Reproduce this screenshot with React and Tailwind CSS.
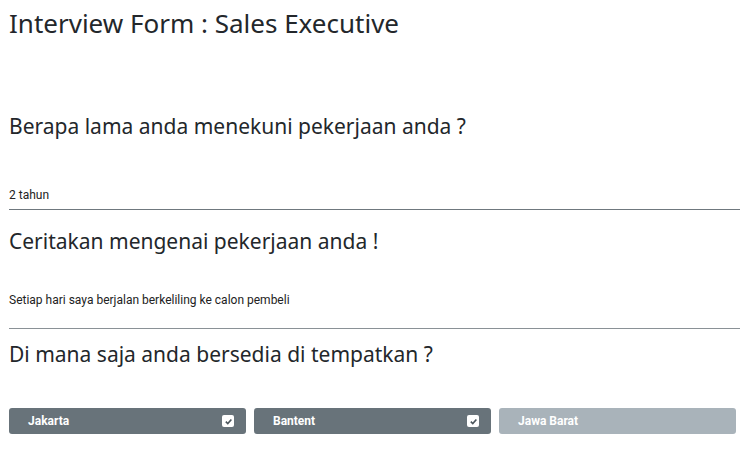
import React from "react";

const heading = { fontFamily: '"Noto Sans", sans-serif' };

function Check() {
  return (
    <span className="flex h-[12px] w-[12px] items-center justify-center rounded-[2px] bg-white">
      <svg width="9" height="9" viewBox="0 0 10 10">
        <path d="M2 5.2 L4.2 7.3 L8.2 2.8" fill="none" stroke="#4b555c" strokeWidth="1.8" />
      </svg>
    </span>
  );
}

function Option({ label, checked, disabled }) {
  return (
    <div
      className={`flex h-[26px] flex-1 items-center justify-between rounded-[3px] pl-[19px] pr-[12px] text-[12px] font-bold text-white ${
        disabled ? "bg-[#a9b3ba] text-[#eef1f3]" : "bg-[#68737a]"
      }`}
    >
      <span>{label}</span>
      {checked && <Check />}
    </div>
  );
}

export default function App() {
  return (
    <div className="min-h-[450px] bg-white pl-[9px] text-[#1f2328]" style={{ fontFamily: "Roboto, sans-serif" }}>
      <h1 className="pt-[5px] text-[26px] leading-[36px] text-[#23272b]" style={heading}>
        Interview Form : Sales Executive
      </h1>

      <h2 className="mt-[69px] text-[21px] leading-[32px] text-[#23272b]" style={heading}>
        Berapa lama anda menekuni pekerjaan anda ?
      </h2>
      <div className="mt-[46px] border-b border-[#6f787e] pb-[7px] text-[12px] leading-[14px] text-[#222]">
        2 tahun
      </div>

      <h2 className="mt-[15px] text-[21px] leading-[32px] text-[#23272b]" style={heading}>
        Ceritakan mengenai pekerjaan anda !
      </h2>
      <div className="mt-[36px] h-[36px] border-b border-[#8a9196] text-[12px] leading-[14px] text-[#222]">
        Setiap hari saya berjalan berkeliling ke calon pembeli
      </div>

      <h2 className="mt-[9px] text-[21px] leading-[32px] text-[#23272b]" style={heading}>
        Di mana saja anda bersedia di tempatkan ?
      </h2>

      <div className="mt-[38px] flex gap-[8px] pr-[4px]">
        <Option label="Jakarta" checked />
        <Option label="Bantent" checked />
        <Option label="Jawa Barat" disabled />
      </div>
    </div>
  );
}
